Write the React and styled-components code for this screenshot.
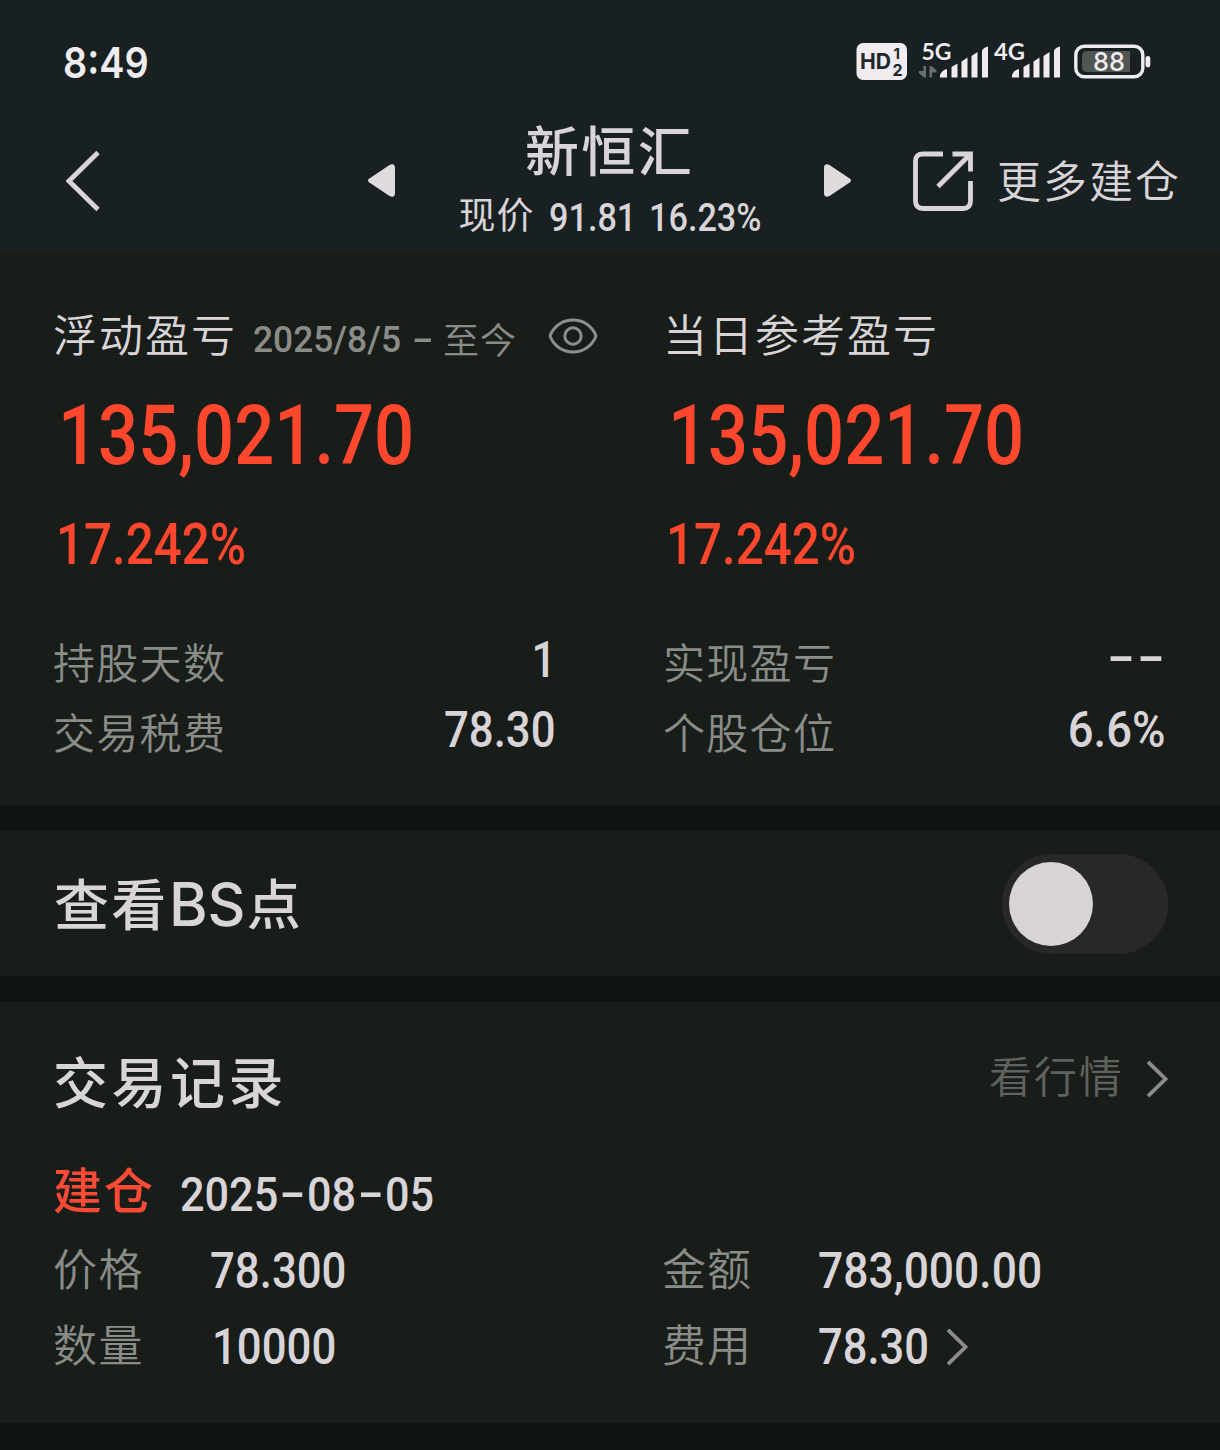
import React from "react";
import styled, { createGlobalStyle } from "styled-components";

const ink = "#d8d4d8";
const grey = "#8a8c88";
const dim = "#60625f";
const red = "#ff472e";

const GlobalStyle = createGlobalStyle`
  *, *::before, *::after { box-sizing: border-box; }
  body {
    margin: 0;
    background: #101410;
    font-family: "Noto Sans CJK SC", sans-serif;
    color: ${ink};
  }
  svg { display: block; flex: none; }
`;

const Screen = styled.main`
  width: 1220px;
  height: 1450px;
  overflow: hidden;
  display: flex;
  flex-direction: column;
  background: #0f1410;
`;

const Header = styled.header`
  height: 251px;
  background: #182021;
`;

const StatusBar = styled.div`
  height: 124px;
  padding: 0 64px 0 63px;
  display: flex;
  align-items: center;
  justify-content: space-between;
`;

const Label = styled.span`
  display: block;
  flex: none;
  white-space: nowrap;
  line-height: 1;
  padding-bottom: ${(p) => p.$lift ?? 0.1}em;
  font-size: ${(p) => p.$size}px;
  font-weight: ${(p) => p.$weight || 350};
  letter-spacing: ${(p) => p.$gap || 0}px;
  color: ${(p) => p.$color || ink};
`;

const Figure = styled.span`
  display: block;
  flex: none;
  white-space: nowrap;
  font-family: ${(p) => p.$font || "Roboto"}, "Noto Sans CJK SC", sans-serif;
  line-height: 1;
  font-size: ${(p) => p.$size}px;
  font-weight: ${(p) => p.$weight || 500};
  letter-spacing: ${(p) => p.$gap || 0}px;
  color: ${(p) => p.$color || ink};
  transform: scaleX(${(p) => p.$narrow || 1});
  transform-origin: ${(p) => p.$origin || "left"} center;
`;

const Dash = styled.span`
  display: inline-block;
  width: ${(p) => p.$width}px;
  text-align: center;
  transform: scaleX(${(p) => p.$stretch || 1.6});
`;

const DateDash = styled(Dash)`
  transform: scaleX(1.75) translateY(-2px);
`;

const PeriodDash = styled(Dash)`
  margin: 0 2px 0 -3px;
`;

const Nav = styled.nav`
  height: 114px;
  display: grid;
  grid-template-columns: 302px 28px 427px 28px 1fr;
  grid-template-rows: 114px;
  padding-left: 66px;
  align-items: center;
`;

const NavTitle = styled.div`
  align-self: start;
  display: flex;
  flex-direction: column;
  align-items: center;
  gap: 14px;
  margin-top: -2px;
`;

const Quote = styled.div`
  width: 302px;
  height: 38px;
  display: grid;
  grid-template-columns: 90px 100px 1fr;
  align-items: center;
`;

const MoreLink = styled.div`
  display: flex;
  align-items: center;
  gap: 23px;
  padding-left: 62px;
`;

const Panel = styled.section`
  background: #181d1a;
  margin-bottom: 26px;
`;

const Summary = styled(Panel)`
  height: 554px;
  padding-top: 55px;
  display: grid;
  grid-template-columns: 610px 610px;
`;

const Column = styled.div`
  padding: 0 54px 0 53px;
`;

const ColumnHead = styled.div`
  height: 60px;
  width: 560px;
  padding-bottom: 1px;
  display: flex;
  align-items: center;
`;

const Period = styled.div`
  display: flex;
  align-items: center;
  padding: 8px 31px 0 16px;
`;

const Amount = styled.div`
  height: 138px;
  display: flex;
  align-items: center;
  padding: 2px 0 0 5px;
`;

const Percent = styled.div`
  height: 80px;
  display: flex;
  align-items: center;
  padding-left: 3px;
  margin-bottom: 42px;
`;

const StatRow = styled.div`
  height: 70px;
  display: flex;
  align-items: center;
  justify-content: space-between;
`;

const StatValue = styled.div`
  padding-bottom: ${(p) => p.$raise || 3}px;
`;

const SwitchPanel = styled(Panel)`
  height: 145px;
  padding: 0 52px 0 54px;
  display: flex;
  align-items: center;
  justify-content: space-between;
`;

const SwitchLabel = styled.div`
  display: flex;
  align-items: center;
`;

const Toggle = styled.button`
  width: 166px;
  height: 100px;
  padding: 7px;
  border: 0;
  border-radius: 50px;
  background: #282828;
  display: flex;
  align-items: center;
`;

const Knob = styled.span`
  width: 84px;
  height: 84px;
  border-radius: 50%;
  background: #d8d3d7;
`;

const Records = styled(Panel)`
  height: 421px;
  padding: 37px 0 0 53px;
`;

const RecordsHead = styled.div`
  height: 80px;
  padding-right: 51px;
  margin-bottom: 31px;
  display: flex;
  align-items: center;
  justify-content: space-between;
`;

const MarketLink = styled.div`
  display: flex;
  align-items: center;
  gap: 21px;
`;

const RecordDate = styled.div`
  height: 76px;
  margin-bottom: 4px;
  display: flex;
  align-items: center;
  gap: 25px;
`;

const DateValue = styled.div`
  padding-top: 13px;
`;

const Details = styled.div`
  display: grid;
  grid-template-columns: 609px 1fr;
  grid-auto-rows: 76px;
`;

const Detail = styled.div`
  display: grid;
  grid-template-columns: 156px auto 1fr;
  align-items: center;
`;

const DetailValue = styled.div`
  padding-top: 6px;
  width: ${(p) => p.$width || 240}px;
  padding-left: ${(p) => p.$inset || 0}px;
`;

const FeeArrow = styled.div`
  padding-top: 5px;
`;

const SignalBars = ({ x }) => (
  <g fill="#efebef">
    <path d={`M${x} 77.5 V75 Q${x + 2} 70 ${x + 7} 69 V77.5 Z`} />
    <path d={`M${x + 11.5} 77.5 V67 L${x + 17.5} 63.5 V77.5 Z`} />
    <path d={`M${x + 21.5} 77.5 V61.5 L${x + 27.5} 57.5 V77.5 Z`} />
    <path d={`M${x + 31.5} 77.5 V56 L${x + 37.5} 52 V77.5 Z`} />
    <path d={`M${x + 42} 77.5 V51 Q${x + 42.5} 48 ${x + 48} 46.5 V77.5 Z`} />
  </g>
);

const StatusIcons = () => (
  <svg
    width="302"
    height="60"
    viewBox="854 32 302 60"
    fontFamily="Lato, sans-serif"
    fontWeight="700"
  >
    <rect x="856.5" y="43" width="50.5" height="37" rx="6.5" fill="#efebef" />
    <g fill="#20282a" fontFamily="Inter, sans-serif">
      <text x="860" y="69.3" fontSize="21.5" textLength="31" lengthAdjust="spacingAndGlyphs">HD</text>
      <text x="893.5" y="59.3" fontSize="15">1</text>
      <text x="892.5" y="76" fontSize="16">2</text>
    </g>
    <g fill="#efebef">
      <text x="921.5" y="60.3" fontSize="23" textLength="30" lengthAdjust="spacingAndGlyphs">5G</text>
      <text x="994" y="60.3" fontSize="23" textLength="31" lengthAdjust="spacingAndGlyphs">4G</text>
    </g>
    <g fill="#686d6d">
      <path d="M923.4 66 H926 V77.5 H924 L919 73.2 V71 H923.4 Z" />
      <path d="M929.5 77.5 V66 H931.5 L936.5 70.3 V72.5 H932.1 V77.5 Z" />
    </g>
    <SignalBars x={940} />
    <SignalBars x={1012} />
    <rect x="1075.8" y="46.3" width="67" height="30.4" rx="8.5" fill="none" stroke="#efebef" strokeWidth="3.4" />
    <path d="M1087 51 H1130 V72 H1087 Q1082 72 1082 67 V56 Q1082 51 1087 51 Z" fill="#525652" />
    <rect x="1145.5" y="56" width="4.8" height="11.5" rx="2.4" fill="#efebef" />
    <text x="1093" y="71.3" fontFamily="Inter, sans-serif" fontWeight="500" fontSize="26" textLength="32" lengthAdjust="spacingAndGlyphs" fill="#efebef">88</text>
  </svg>
);

const BackIcon = () => (
  <svg width="36" height="62" viewBox="0 0 36 62" fill="none" stroke={ink} strokeWidth="4.8">
    <path d="M32 2.5 L3 31 L32 59.5" />
  </svg>
);

const Triangle = ({ flip }) => (
  <svg width="28" height="34" viewBox="0 0 28 34" fill="#dfdbdf">
    <path
      transform={flip ? "matrix(-1 0 0 1 28 0)" : undefined}
      d="M1 14.8 L21.5 1 Q27 -1.2 27 4 V29 Q27 34.2 21.5 32 L1 18.2 Q-1 16.5 1 14.8 Z"
    />
  </svg>
);

const ExportIcon = () => (
  <svg width="61" height="61" viewBox="0 0 61 61" fill="none" stroke={ink} strokeWidth="4.8">
    <path d="M30 3 H10 Q2.5 3 2.5 10 V50 Q2.5 57.5 10 57.5 H50 Q57.5 57.5 57.5 50 V30" />
    <path d="M39.5 3 H57.5 V20.5 M57 3.5 L25 35.5" />
  </svg>
);

const EyeIcon = () => (
  <svg width="50" height="36" viewBox="0 0 50 36" fill="none" stroke="#8d8f8c" strokeWidth="3">
    <path d="M2 18 C10 -3.2 40 -3.2 48 18 C40 39.2 10 39.2 2 18 Z" strokeLinejoin="round" />
    <circle cx="25" cy="18" r="8.2" />
  </svg>
);

const Chevron = () => (
  <svg width="24" height="38" viewBox="0 0 24 38" fill="none" stroke="#8c8c8c" strokeWidth="3.8">
    <path d="M3 1.8 L20.5 19 L3 36.2" />
  </svg>
);

const Stat = ({ label, children, narrow = 0.875, raise }) => (
  <StatRow>
    <Label $size={42} $gap={1.3} $lift={0.02} $color={grey}>{label}</Label>
    <StatValue $raise={raise}>
      <Figure $size={50} $narrow={narrow} $origin="right">{children}</Figure>
    </StatValue>
  </StatRow>
);

const Profit = () => (
  <>
    <Amount>
      <Figure $size={84} $narrow={0.84} $color={red}>135,021.70</Figure>
    </Amount>
    <Percent>
      <Figure $size={57} $narrow={0.864} $color={red}>17.242%</Figure>
    </Percent>
  </>
);

export default function App() {
  return (
    <>
      <GlobalStyle />
      <Screen>
        <Header>
          <StatusBar>
            <Figure $font="Inter" $size={43} $narrow={0.88} $weight={600} $color="#efebef">8:49</Figure>
            <StatusIcons />
          </StatusBar>
          <Nav>
            <BackIcon />
            <Triangle />
            <NavTitle>
              <Label $size={54} $gap={2.3} $weight={500}>新恒汇</Label>
              <Quote>
                <Label $size={37} $gap={1} $weight={400} $lift={0.2}>现价</Label>
                <Figure $size={38} $narrow={0.9}>91.81</Figure>
                <Figure $size={38} $narrow={0.9}>16.23%</Figure>
              </Quote>
            </NavTitle>
            <Triangle flip />
            <MoreLink>
              <ExportIcon />
              <Label $size={44} $gap={2}>更多建仓</Label>
            </MoreLink>
          </Nav>
        </Header>

        <Summary>
          <Column>
            <ColumnHead>
              <Label $size={44} $gap={2}>浮动盈亏</Label>
              <Period>
                <Figure $size={37} $narrow={0.955} $color={grey}>2025/8/5</Figure>
                <PeriodDash $width={36} $stretch={1.7}>
                  <Figure $size={37} $color={grey}>-</Figure>
                </PeriodDash>
                <Label $size={36} $gap={1} $color={grey}>至今</Label>
              </Period>
              <EyeIcon />
            </ColumnHead>
            <Profit />
            <Stat label="持股天数">1</Stat>
            <Stat label="交易税费">78.30</Stat>
          </Column>
          <Column>
            <ColumnHead>
              <Label $size={44} $gap={2}>当日参考盈亏</Label>
            </ColumnHead>
            <Profit />
            <Stat label="实现盈亏" narrow={1} raise={9}>
              <Dash $width={30}>-</Dash>
              <Dash $width={30}>-</Dash>
            </Stat>
            <Stat label="个股仓位" narrow={0.91}>6.6%</Stat>
          </Column>
        </Summary>

        <SwitchPanel>
          <SwitchLabel>
            <Label $size={55} $gap={2.3} $weight={500} $lift={0.06}>查看</Label>
            <Figure $font="Inter" $size={60} $narrow={0.98} $weight={500}>BS</Figure>
            <Label $size={54} $weight={500} $lift={0.06}>点</Label>
          </SwitchLabel>
          <Toggle type="button" role="switch" aria-checked="false">
            <Knob />
          </Toggle>
        </SwitchPanel>

        <Records>
          <RecordsHead>
            <Label $size={55} $gap={3.5} $weight={500} $lift={0}>交易记录</Label>
            <MarketLink>
              <Label $size={43} $gap={2} $color={dim} $lift={0.22}>看行情</Label>
              <Chevron />
            </MarketLink>
          </RecordsHead>
          <RecordDate>
            <Label $size={49} $gap={2} $weight={500} $lift={0.04} $color="#f94a35">建仓</Label>
            <DateValue>
              <Figure $size={48} $narrow={0.9}>
                2025<DateDash $width={32}>-</DateDash>08<DateDash $width={32}>-</DateDash>05
              </Figure>
            </DateValue>
          </RecordDate>
          <Details>
            <Detail>
              <Label $size={44} $gap={1.5} $lift={0.04} $color={grey}>价格</Label>
              <DetailValue $inset={1}><Figure $size={50} $narrow={0.875}>78.300</Figure></DetailValue>
            </Detail>
            <Detail>
              <Label $size={44} $gap={1} $lift={0.04} $color={grey}>金额</Label>
              <DetailValue><Figure $size={50} $narrow={0.888}>783,000.00</Figure></DetailValue>
            </Detail>
            <Detail>
              <Label $size={44} $gap={1.5} $lift={0.04} $color={grey}>数量</Label>
              <DetailValue $inset={3}><Figure $size={50} $narrow={0.875}>10000</Figure></DetailValue>
            </Detail>
            <Detail>
              <Label $size={44} $gap={1} $lift={0.04} $color={grey}>费用</Label>
              <DetailValue $width={127}><Figure $size={50} $narrow={0.87}>78.30</Figure></DetailValue>
              <FeeArrow><Chevron /></FeeArrow>
            </Detail>
          </Details>
        </Records>
      </Screen>
    </>
  );
}
